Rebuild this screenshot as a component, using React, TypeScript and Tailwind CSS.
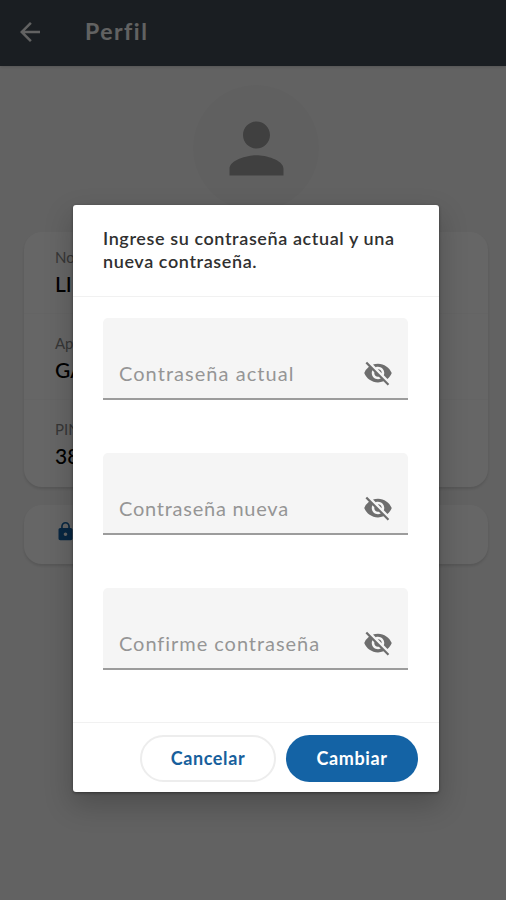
import { MdArrowBack, MdLock, MdPerson, MdVisibilityOff } from 'react-icons/md';

const profile = [
  { label: 'Nombre', value: 'LI', row: 'h-[82px] pt-[15px]' },
  { label: 'Apellido', value: 'GA', row: 'h-[86px] pt-[19px]' },
  { label: 'PIN', value: '38', row: 'h-[87px] pt-[19px]' },
];

const fields = [
  { label: 'Contraseña actual', tracking: 'tracking-[1.05px]' },
  { label: 'Contraseña nueva', tracking: 'tracking-[0.75px]' },
  { label: 'Confirme contraseña', tracking: 'tracking-[0.95px]' },
];

function ProfilePage() {
  return (
    <div className="h-full bg-[#f5f5f5]">
      <header className="flex h-[66px] items-center bg-[#414d55] pb-[3px] pl-[15px] text-[#f5f5f5] shadow-sm">
        <MdArrowBack size={30} />
        <h1 className="ml-10 text-[23px] font-bold leading-none tracking-[1.5px]">Perfil</h1>
      </header>
      <main className="flex flex-col pl-6 pr-[18px] pt-[19px]">
        <div className="flex size-[126px] items-center justify-center self-center rounded-full bg-[#f1f1f1]">
          <MdPerson size={81} className="text-[#a0a0a0]" />
        </div>
        <section className="mt-[21px] h-[255px] rounded-[18px] bg-white shadow-[0_2px_3px_rgba(0,0,0,0.12)]">
          {profile.map(({ label, value, row }) => (
            <div key={label} className={`${row} border-b border-[#fafafa] pl-[31px] last:border-b-0`}>
              <p className="text-[15px] leading-5 text-[#888]">{label}</p>
              <p className="mt-[3px] text-[21px] font-medium leading-7 text-black">{value}</p>
            </div>
          ))}
        </section>
        <section className="mt-[18px] flex h-[59px] items-center rounded-[18px] bg-white pb-[6px] pl-[31px] shadow-[0_2px_3px_rgba(0,0,0,0.12)]">
          <MdLock size={21} className="text-[#1463a5]" />
        </section>
      </main>
    </div>
  );
}

function PasswordField({ label, tracking }: { label: string; tracking: string }) {
  return (
    <label className="flex h-[82px] items-end justify-between rounded-t-[5px] border-b-2 border-[#9c9c9c] bg-[#f5f5f5] pb-[10px] pl-4 pr-[15px]">
      <span className={`pb-[1px] text-[20px] leading-7 text-[#959595] ${tracking}`}>{label}</span>
      <MdVisibilityOff size={30} className="text-[#6e6e6e]" />
    </label>
  );
}

export default function App() {
  return (
    <div className="relative h-[900px] w-[506px] overflow-hidden font-['Lato',sans-serif]">
      <ProfilePage />
      {/* Dialog */}
      <div className="absolute inset-0 flex items-start justify-center bg-black/60 pl-[6px] pt-[205px]">
        <div className="flex h-[587px] w-[366px] flex-col rounded-[3px] bg-white shadow-[0_12px_28px_2px_rgba(0,0,0,0.2),0_1px_3px_rgba(0,0,0,0.4)]">
          <h2 className="h-[92px] border-b border-[#f1f1f1] pl-[30px] pt-[22px] text-[18px] font-semibold leading-[23px] tracking-[0.6px] text-[#303030]">
            Ingrese su contraseña actual y una
            <br />
            nueva contraseña.
          </h2>
          <div className="flex flex-1 flex-col gap-[53px] pl-[30px] pr-[31px] pt-[21px]">
            {fields.map((field) => (
              <PasswordField key={field.label} {...field} />
            ))}
          </div>
          <div className="flex h-[70px] justify-end gap-[10px] border-t border-[#f1f1f1] pr-[21px] pt-[12px]">
            <button className="h-[47px] w-[136px] rounded-full border-2 border-[#ededed] text-[18px] font-bold tracking-[0.6px] text-[#17609c]">
              Cancelar
            </button>
            <button className="h-[47px] w-[132px] rounded-full bg-[#1463a5] text-[18px] font-bold tracking-[0.6px] text-white">
              Cambiar
            </button>
          </div>
        </div>
      </div>
    </div>
  );
}
